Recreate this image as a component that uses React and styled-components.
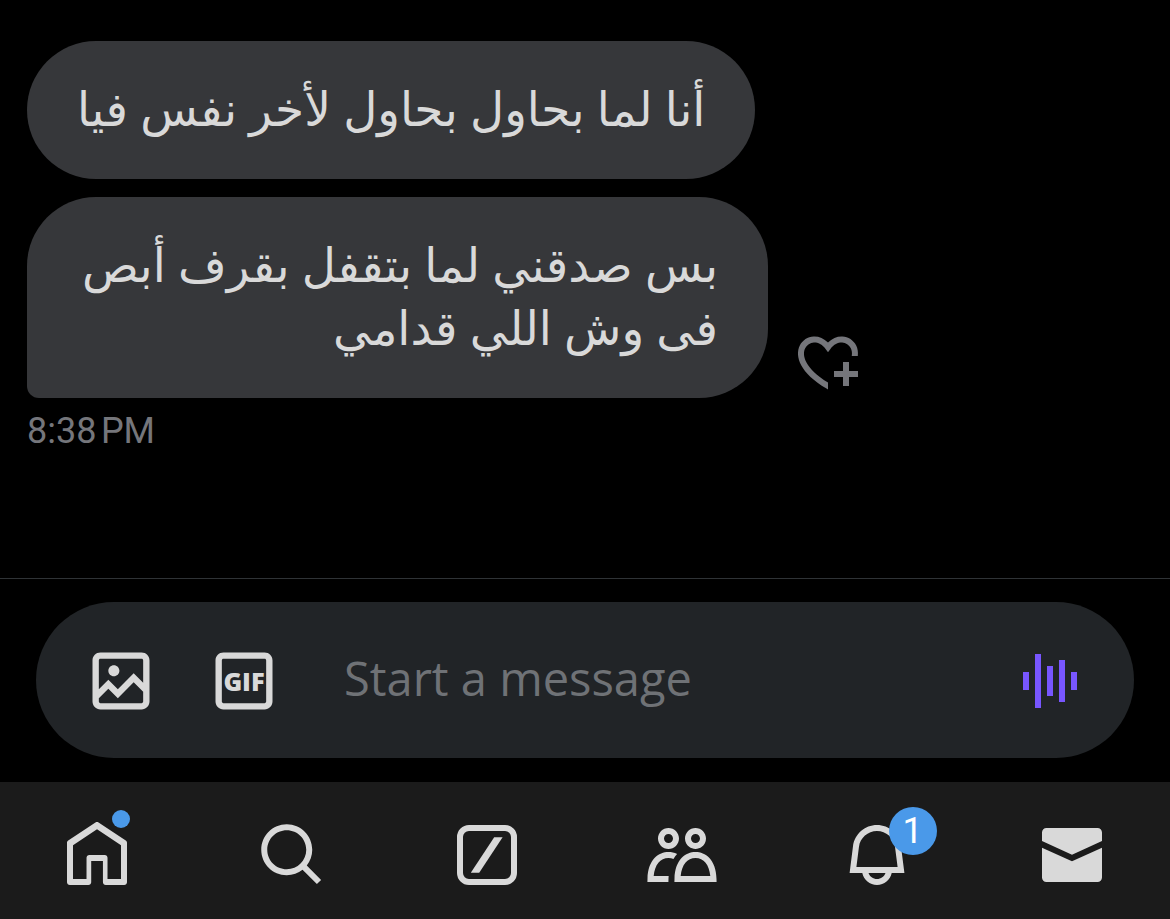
import React, { useState } from 'react';
import styled, { createGlobalStyle } from 'styled-components';

const GlobalStyle = createGlobalStyle`
  * {
    box-sizing: border-box;
  }

  body {
    margin: 0;
    background: #000;
    font-family: Roboto, 'Liberation Sans', sans-serif;
  }
`;

const Page = styled.div`
  display: flex;
  flex-direction: column;
  min-height: 100vh;
`;

const Conversation = styled.main`
  flex: 1;
  padding: 41px 27px 0;
`;

const MessageRow = styled.div`
  display: flex;
  align-items: flex-end;
  gap: 24px;
  margin-bottom: ${({ $last }) => ($last ? '0' : '18px')};
`;

const Bubble = styled.p`
  max-width: 741px;
  margin: 0;
  padding: 36px 50px 39px;
  border-radius: ${({ $tail }) => ($tail ? '69px 69px 69px 12px' : '69px')};
  background: #36373a;
  color: #d9d9d9;
  font-family: 'Noto Sans', 'DejaVu Sans', sans-serif;
  font-size: 47px;
  line-height: 63px;
`;

const Timestamp = styled.time`
  display: block;
  margin-top: 10px;
  color: #75767b;
  font-size: 36px;
  line-height: 46px;
`;

const ComposerArea = styled.footer`
  padding: 23px 36px 24px;
  border-top: 1px solid #2f3336;
`;

const Composer = styled.form`
  display: flex;
  align-items: center;
  height: 156px;
  padding: 2px 48px 0 47px;
  border-radius: 78px;
  background: #212427;
`;

const MediaButtons = styled.div`
  display: flex;
  gap: 47px;
  margin-right: 62px;
`;

const IconButton = styled.button`
  display: flex;
  flex: none;
  padding: 0;
  border: 0;
  background: none;
  color: ${({ $color }) => $color || '#d9d9d9'};
  cursor: pointer;
`;

const MessageInput = styled.input`
  flex: 1;
  min-width: 0;
  padding: 0 0 6px;
  border: 0;
  outline: 0;
  background: none;
  color: #d9d9d9;
  font-family: 'Open Sans', sans-serif;
  font-size: 47px;
  line-height: 60px;

  &::placeholder {
    color: #6f7276;
    opacity: 1;
  }
`;

const TabBar = styled.nav`
  display: flex;
  padding: 37px 1px 28px 0;
  background: #1b1b1b;
`;

const Tab = styled.a`
  display: flex;
  flex: 1;
  justify-content: center;
  color: #d9d9d9;
  text-decoration: none;
`;

const TabIcon = styled.span`
  display: flex;
  position: relative;
`;

const Dot = styled.span`
  position: absolute;
  top: -9px;
  left: 51px;
  width: 18px;
  height: 18px;
  border-radius: 50%;
  background: #4a99e9;
`;

const Badge = styled.span`
  position: absolute;
  top: -12px;
  left: 48px;
  width: 48px;
  height: 48px;
  border-radius: 50%;
  background: #4a99e9;
  color: #fff;
  font-size: 36px;
  line-height: 48px;
  text-align: center;
`;

const Svg = styled.svg`
  display: block;
  width: ${({ $size }) => $size || 72}px;
  height: ${({ $size }) => $size || 72}px;
  fill: currentColor;
`;

const GifText = styled.text`
  font-family: 'Open Sans', sans-serif;
  font-size: 8px;
  font-weight: 800;
  text-anchor: middle;
`;

const Icon = ({ size, children }) => (
  <Svg viewBox="0 0 24 24" $size={size} aria-hidden="true">
    {children}
  </Svg>
);

const tabs = [
  {
    name: 'Home',
    dot: true,
    icon: <path d="M21.591 7.146L12.52 1.157c-.316-.21-.724-.21-1.04 0l-9.071 5.99c-.26.173-.409.456-.409.757v13.183c0 .502.418.913.929.913H9.14c.51 0 .929-.41.929-.913v-7.075h3.909v7.075c0 .502.417.913.928.913h6.165c.511 0 .929-.41.929-.913V7.904c0-.301-.158-.584-.408-.758zM20 20l-4.5.01.01-7.097c0-.502-.418-.913-.929-.913H9.44c-.511 0-.929.41-.929.913L8.5 20H4V8.773l8.011-5.342L20 8.764z" />,
  },
  {
    name: 'Search',
    icon: <path d="M10.25 3.75c-3.59 0-6.5 2.91-6.5 6.5s2.91 6.5 6.5 6.5c1.795 0 3.419-.726 4.596-1.904 1.178-1.177 1.904-2.801 1.904-4.596 0-3.59-2.91-6.5-6.5-6.5zm-8.5 6.5c0-4.694 3.806-8.5 8.5-8.5s8.5 3.806 8.5 8.5c0 1.986-.682 3.815-1.824 5.262l4.781 4.781-1.414 1.414-4.781-4.781c-1.447 1.142-3.276 1.824-5.262 1.824-4.694 0-8.5-3.806-8.5-8.5z" />,
  },
  {
    name: 'Grok',
    icon: (
      <>
        <rect x="3" y="3" width="18" height="18" rx="3" fill="none" stroke="currentColor" strokeWidth="2" />
        <path d="M14.4 6.1h2.8L9.4 17.9H6.6z" />
      </>
    ),
  },
  {
    name: 'Communities',
    icon: <path d="M7.501 19.917L7.471 21H.472l.029-1.027c.184-6.618 3.736-8.977 7-8.977.963 0 1.95.212 2.87.672-.444.478-.851 1.03-1.212 1.656-.507-.204-1.054-.329-1.658-.329-2.767 0-4.57 2.223-4.938 6.004H7.56c-.023.302-.05.599-.059.918zm15.998.056L23.528 21H9.472l.029-1.027c.184-6.618 3.736-8.977 7-8.977s6.816 2.358 7 8.977zM21.437 19c-.367-3.781-2.17-6.004-4.938-6.004s-4.57 2.223-4.938 6.004h9.875zm-4.938-9c-.799 0-1.527-.279-2.116-.73-.836-.64-1.384-1.638-1.384-2.77 0-1.93 1.567-3.5 3.5-3.5s3.5 1.57 3.5 3.5c0 1.132-.548 2.13-1.384 2.77-.589.451-1.317.73-2.116.73zm-1.5-3.5c0 .827.673 1.5 1.5 1.5s1.5-.673 1.5-1.5-.673-1.5-1.5-1.5-1.5.673-1.5 1.5zM7.5 3C9.433 3 11 4.57 11 6.5S9.433 10 7.5 10 4 8.43 4 6.5 5.567 3 7.5 3zm0 2C6.673 5 6 5.673 6 6.5S6.673 8 7.5 8 9 7.327 9 6.5 8.327 5 7.5 5z" />,
  },
  {
    name: 'Notifications',
    count: 1,
    icon: <path d="M19.993 9.042C19.48 5.017 16.054 2 11.996 2s-7.49 3.021-7.999 7.051L2.866 18H7.1c.463 2.282 2.481 4 4.9 4s4.437-1.718 4.9-4h4.236l-1.143-8.958zM12 20c-1.306 0-2.417-.835-2.829-2h5.658c-.412 1.165-1.523 2-2.829 2zm-6.866-4l.847-6.698C6.364 6.272 8.941 4 11.996 4s5.627 2.268 6.013 5.295L18.864 16H5.134z" />,
  },
  {
    name: 'Messages',
    icon: <path d="M1.998 4.499c0-.828.671-1.499 1.5-1.499h17c.828 0 1.5.671 1.5 1.499v2.858l-10 4.545-10-4.547V4.499zm0 5.053V19.5c0 .828.671 1.5 1.5 1.5h17c.828 0 1.5-.672 1.5-1.5V9.554l-10 4.545-10-4.547z" />,
  },
];

const App = () => {
  const [text, setText] = useState('');

  return (
    <Page>
      <GlobalStyle />
      <Conversation>
        <MessageRow>
          <Bubble dir="rtl" lang="ar">أنا لما بحاول بحاول لأخر نفس فيا</Bubble>
        </MessageRow>
        <MessageRow $last>
          <Bubble dir="rtl" lang="ar" $tail>بس صدقني لما بتقفل بقرف أبص فى وش اللي قدامي</Bubble>
          <IconButton type="button" aria-label="Add reaction" $color="#75767b">
            <Icon>
              <path d="M17 12v3h-2.998v2h3v3h2v-3h3v-2h-3.001v-3H17zm-5 6.839c-3.871-2.34-6.053-4.639-7.127-6.609-1.112-2.04-1.031-3.7-.479-4.82.561-1.13 1.667-1.84 2.91-1.91 1.222-.06 2.68.51 3.892 2.16l.806 1.09.805-1.09c1.211-1.65 2.668-2.22 3.89-2.16 1.242.07 2.347.78 2.908 1.91.334.677.49 1.554.321 2.59h2.011c.153-1.283-.039-2.469-.539-3.48-.887-1.79-2.647-2.91-4.601-3.01-1.65-.09-3.367.56-4.796 2.01-1.43-1.45-3.147-2.1-4.798-2.01-1.954.1-3.714 1.22-4.601 3.01-.896 1.81-.846 4.17.514 6.67 1.353 2.48 4.003 5.12 8.382 7.67l.502.299v-2.32z" />
            </Icon>
          </IconButton>
        </MessageRow>
        <Timestamp dateTime="20:38">8:38{'\u202f'}PM</Timestamp>
      </Conversation>

      <ComposerArea>
        <Composer onSubmit={e => e.preventDefault()}>
          <MediaButtons>
            <IconButton type="button" aria-label="Add photo">
              <Icon size={76}>
                <path d="M3 5.5C3 4.119 4.119 3 5.5 3h13C19.881 3 21 4.119 21 5.5v13c0 1.381-1.119 2.5-2.5 2.5h-13C4.119 21 3 19.881 3 18.5v-13zM5.5 5c-.276 0-.5.224-.5.5v9.086l3-3 3 3 5-5 3 3V5.5c0-.276-.224-.5-.5-.5h-13zM19 15.414l-3-3-5 5-3-3-3 3V18.5c0 .276.224.5.5.5h13c.276 0 .5-.224.5-.5v-3.086zM9.75 7C8.784 7 8 7.784 8 8.75s.784 1.75 1.75 1.75 1.75-.784 1.75-1.75S10.716 7 9.75 7z" />
              </Icon>
            </IconButton>
            <IconButton type="button" aria-label="Add GIF">
              <Icon size={76}>
                <path d="M3 5.5C3 4.119 4.12 3 5.5 3h13C19.88 3 21 4.119 21 5.5v13c0 1.381-1.12 2.5-2.5 2.5h-13C4.12 21 3 19.881 3 18.5v-13zM5.5 5c-.28 0-.5.224-.5.5v13c0 .276.22.5.5.5h13c.28 0 .5-.224.5-.5v-13c0-.276-.22-.5-.5-.5h-13z" />
                <GifText x="12" y="15">GIF</GifText>
              </Icon>
            </IconButton>
          </MediaButtons>
          <MessageInput
            type="text"
            aria-label="Start a message"
            placeholder="Start a message"
            value={text}
            onChange={e => setText(e.target.value)}
          />
          <IconButton type="button" aria-label="Record voice message" $color="#7856ff">
            <Icon>
              <path d="M3 9h2v6H3zM7 3h2v18H7zM11 7h2v10h-2zM15 5h2v14h-2zM19 9h2v6h-2z" />
            </Icon>
          </IconButton>
        </Composer>
      </ComposerArea>

      <TabBar>
        {tabs.map(({ name, icon, dot, count }) => (
          <Tab key={name} href={`#${name.toLowerCase()}`} aria-label={name}>
            <TabIcon>
              <Icon>{icon}</Icon>
              {dot && <Dot />}
              {count && <Badge>{count}</Badge>}
            </TabIcon>
          </Tab>
        ))}
      </TabBar>
    </Page>
  );
};

export default App;
